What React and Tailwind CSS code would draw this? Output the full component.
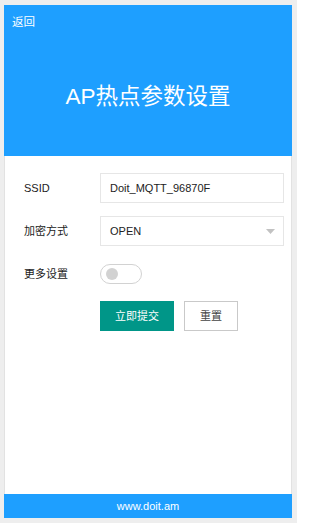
export default function App() {
  const font = { fontFamily: '"Liberation Sans", "Noto Sans CJK SC", sans-serif' }

  return (
    <div className="w-[297px] h-[523px] bg-[#eeeeee] pt-[5px] pl-[4px] pr-[5px] pb-[5px]" style={font}>
      <div className="h-full flex flex-col bg-white">
        {/* Header */}
        <div className="h-[151px] bg-[#1E9FFF] flex flex-col text-white">
          <div className="pl-[8px] pt-[9px] text-[11.5px] leading-[16px]">返回</div>
          <div className="flex-1 flex items-center justify-center pt-[8px] text-[22.5px] leading-none">
            AP热点参数设置
          </div>
        </div>

        {/* Form */}
        <div className="flex-1 border-x border-[#e2e2e2] pl-[19px] pr-[7px] pt-[17px]">
          <div className="flex items-center h-[30px]">
            <div className="w-[76px] text-[11px] text-[#222]">SSID</div>
            <div className="flex-1 h-[30px] border border-[#e6e6e6] flex items-center pl-[9px] text-[11px] text-[#222]">
              Doit_MQTT_96870F
            </div>
          </div>

          <div className="flex items-center h-[30px] mt-[13px]">
            <div className="w-[76px] text-[11px] text-[#222]">加密方式</div>
            <div className="flex-1 h-[30px] border border-[#e6e6e6] flex items-center justify-between pl-[9px] pr-[8px] text-[11px] text-[#222]">
              <span>OPEN</span>
              <svg width="9" height="5" viewBox="0 0 9 5">
                <path d="M0 0 L9 0 L4.5 5 Z" fill="#c2c2c2" />
              </svg>
            </div>
          </div>

          <div className="flex items-center h-[30px] mt-[13px]">
            <div className="w-[76px] text-[11px] text-[#222]">更多设置</div>
            <div className="w-[42px] h-[20px] rounded-full border border-[#d2d2d2] flex items-center pl-[5px]">
              <div className="w-[12px] h-[12px] rounded-full bg-[#d2d2d2]" />
            </div>
          </div>

          <div className="flex items-center mt-[12px] pl-[76px] gap-[10px]">
            <div className="h-[30px] px-[15px] bg-[#009688] text-white text-[11px] flex items-center">
              立即提交
            </div>
            <div className="h-[30px] px-[15px] border border-[#c9c9c9] text-[#444] text-[11px] flex items-center">
              重置
            </div>
          </div>
        </div>

        {/* Footer */}
        <div className="h-[24px] bg-[#1E9FFF] text-white text-[11px] flex items-center justify-center">
          www.doit.am
        </div>
      </div>
    </div>
  )
}
